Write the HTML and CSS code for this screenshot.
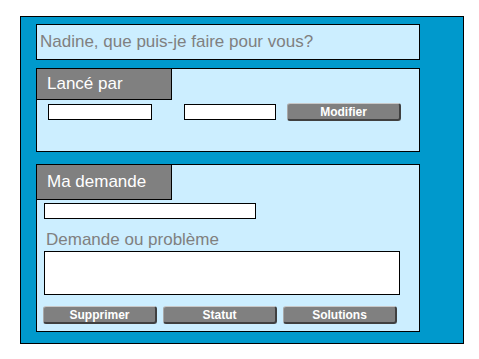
FILE: index.html
```html
<!doctype html>
<html>
<head>
  <meta charset="utf-8">
  <link rel="stylesheet" href="styles.css">
</head>
<body>

  <div class="frame">

    <div class="greeting">Nadine, que puis-je faire pour vous?</div>

    <div class="panel launched">
      <div class="tab tabOne">Lancé par</div>
      <div class="launchRow">
        <input type="text" class="field fieldName">
        <input type="text" class="field fieldId">
        <button class="btn">Modifier</button>
      </div>
    </div>

    <div class="panel request">
      <div class="tab tabTwo">Ma demande</div>
      <div class="requestBody">
        <input type="text" class="field fieldSubject">
        <div class="label">Demande ou problème</div>
        <textarea class="field fieldText"></textarea>
        <div class="btnRow">
          <button class="btn">Supprimer</button>
          <button class="btn">Statut</button>
          <button class="btn">Solutions</button>
        </div>
      </div>
    </div>

  </div>

</body>
</html>
```

FILE: styles.css
```css
body{
  margin: 0;
  background: #ffffff;
  font-family: "Liberation Sans", Arial, sans-serif;
}
.frame{
  margin: 16px 0 0 20px;
  width: 444px;
  height: 328px;
  box-sizing: border-box;
  border: 1px solid #000000;
  background: #0099cc;
  padding: 7px 0 0 15px;
  display: flex;
  flex-direction: column;
}
.greeting{
  width: 384px;
  height: 36px;
  box-sizing: border-box;
  border: 1px solid #000000;
  background: #cceeff;
  color: #808080;
  font-size: 17px;
  line-height: 18px;
  padding-left: 3px;
  display: flex;
  align-items: center;
}
.panel{
  width: 384px;
  box-sizing: border-box;
  border: 1px solid #000000;
  background: #cceeff;
}
.launched{
  margin-top: 8px;
  height: 84px;
}
.request{
  margin-top: 12px;
  height: 168px;
}
.tab{
  width: 136px;
  box-sizing: border-box;
  margin: -1px 0 0 -1px;
  border: 1px solid #000000;
  background: #808080;
  color: #ffffff;
  font-size: 17px;
  line-height: 18px;
  padding-left: 10px;
}
.tabOne{
  height: 32px;
  padding-top: 6px;
}
.tabTwo{
  height: 36px;
  padding-top: 8px;
}
.field{
  display: block;
  margin: 0;
  padding: 0;
  box-sizing: border-box;
  border: 1px solid #000000;
  background: #ffffff;
  height: 16px;
  font-family: "Liberation Sans", Arial, sans-serif;
  resize: none;
  outline: none;
}
.launchRow{
  display: flex;
  align-items: center;
  margin-top: 3px;
  padding-left: 11px;
}
.fieldName{
  width: 104px;
}
.fieldId{
  width: 92px;
  margin-left: 32px;
}
.launchRow .btn{
  margin-left: 11px;
}
.btn{
  width: 114px;
  height: 18px;
  box-sizing: border-box;
  padding: 0;
  background: #808080;
  border-radius: 3px;
  border-top: 1px solid #c8c8c8;
  border-left: 1px solid #a8a8a8;
  border-right: 2px solid #404040;
  border-bottom: 2px solid #404040;
  color: #ffffff;
  font-family: "Liberation Sans", Arial, sans-serif;
  font-weight: bold;
  font-size: 12px;
  line-height: 14px;
}
.requestBody{
  padding: 3px 0 0 7px;
}
.fieldSubject{
  width: 212px;
}
.label{
  margin-top: 12px;
  padding-left: 2px;
  color: #808080;
  font-size: 17px;
  line-height: 18px;
}
.fieldText{
  margin-top: 2px;
  width: 356px;
  height: 44px;
}
.btnRow{
  display: flex;
  gap: 6px;
  margin-top: 11px;
  margin-left: -1px;
}
```
